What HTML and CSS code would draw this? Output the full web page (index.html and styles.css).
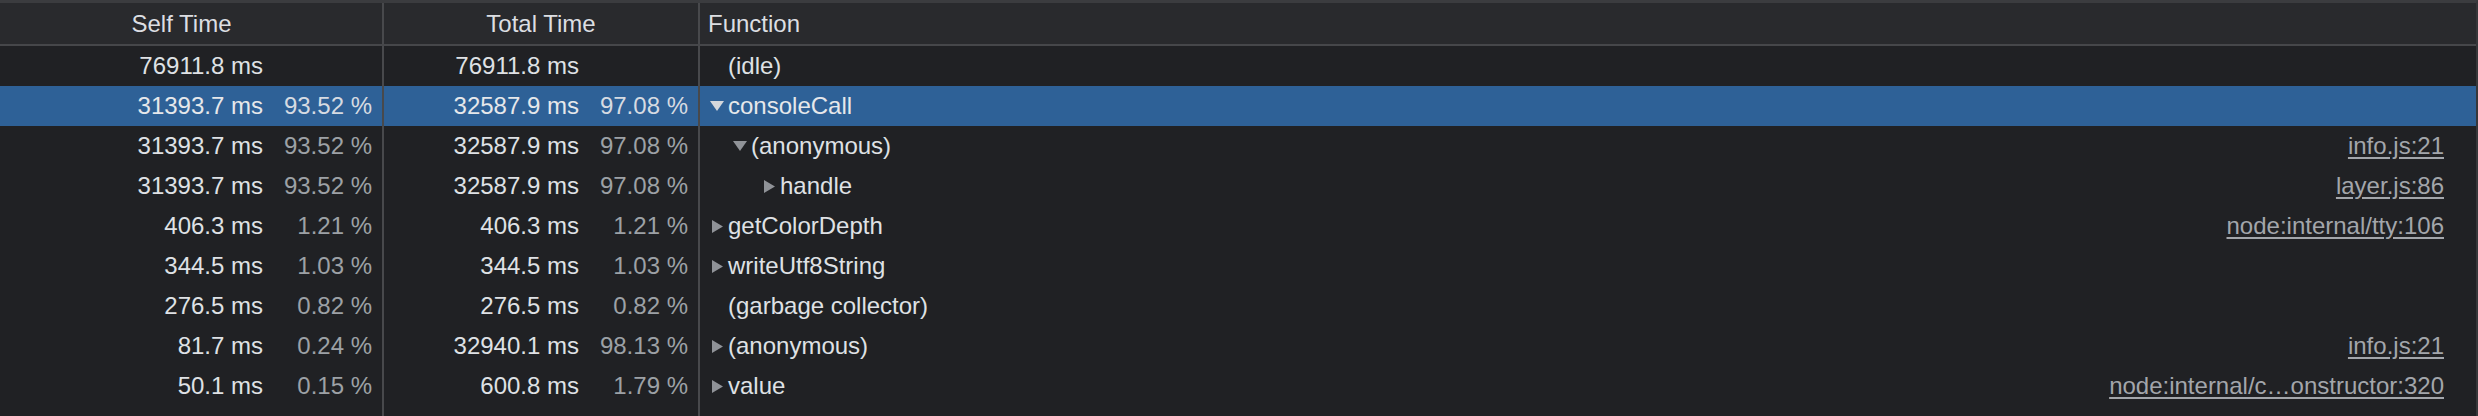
FILE: index.html
```html
<!DOCTYPE html>
<html>
<head>
<meta charset="utf-8">
<link rel="stylesheet" href="styles.css">
</head>
<body>
<div class="grid">
  <div class="row head">
    <div class="cell c-self"><span class="htext self-h">Self Time</span></div>
    <div class="cell c-total"><span class="htext">Total Time</span></div>
    <div class="cell c-func"><span class="htext">Function</span></div>
  </div>

  <div class="row">
    <div class="cell c-self"><span class="num">76911.8 ms</span><span class="pct"></span></div>
    <div class="cell c-total"><span class="num">76911.8 ms</span><span class="pct"></span></div>
    <div class="cell c-func d0"><span class="tog"></span><span class="name">(idle)</span></div>
  </div>

  <div class="row sel">
    <div class="cell c-self"><span class="num">31393.7 ms</span><span class="pct">93.52 %</span></div>
    <div class="cell c-total"><span class="num">32587.9 ms</span><span class="pct">97.08 %</span></div>
    <div class="cell c-func d0"><span class="tog"><svg class="down" width="14" height="10" viewBox="0 0 14 10"><path d="M0 0H14L7 10Z"/></svg></span><span class="name">consoleCall</span></div>
  </div>

  <div class="row">
    <div class="cell c-self"><span class="num">31393.7 ms</span><span class="pct">93.52 %</span></div>
    <div class="cell c-total"><span class="num">32587.9 ms</span><span class="pct">97.08 %</span></div>
    <div class="cell c-func d1"><span class="tog"><svg class="down" width="14" height="10" viewBox="0 0 14 10"><path d="M0 0H14L7 10Z"/></svg></span><span class="name">(anonymous)</span><a class="link">info.js:21</a></div>
  </div>

  <div class="row">
    <div class="cell c-self"><span class="num">31393.7 ms</span><span class="pct">93.52 %</span></div>
    <div class="cell c-total"><span class="num">32587.9 ms</span><span class="pct">97.08 %</span></div>
    <div class="cell c-func d2"><span class="tog"><svg class="right" width="11" height="13" viewBox="0 0 11 13"><path d="M0 0L11 6.5L0 13Z"/></svg></span><span class="name">handle</span><a class="link">layer.js:86</a></div>
  </div>

  <div class="row">
    <div class="cell c-self"><span class="num">406.3 ms</span><span class="pct">1.21 %</span></div>
    <div class="cell c-total"><span class="num">406.3 ms</span><span class="pct">1.21 %</span></div>
    <div class="cell c-func d0"><span class="tog"><svg class="right" width="11" height="13" viewBox="0 0 11 13"><path d="M0 0L11 6.5L0 13Z"/></svg></span><span class="name">getColorDepth</span><a class="link">node:internal/tty:106</a></div>
  </div>

  <div class="row">
    <div class="cell c-self"><span class="num">344.5 ms</span><span class="pct">1.03 %</span></div>
    <div class="cell c-total"><span class="num">344.5 ms</span><span class="pct">1.03 %</span></div>
    <div class="cell c-func d0"><span class="tog"><svg class="right" width="11" height="13" viewBox="0 0 11 13"><path d="M0 0L11 6.5L0 13Z"/></svg></span><span class="name">writeUtf8String</span></div>
  </div>

  <div class="row">
    <div class="cell c-self"><span class="num">276.5 ms</span><span class="pct">0.82 %</span></div>
    <div class="cell c-total"><span class="num">276.5 ms</span><span class="pct">0.82 %</span></div>
    <div class="cell c-func d0"><span class="tog"></span><span class="name">(garbage collector)</span></div>
  </div>

  <div class="row">
    <div class="cell c-self"><span class="num">81.7 ms</span><span class="pct">0.24 %</span></div>
    <div class="cell c-total"><span class="num">32940.1 ms</span><span class="pct">98.13 %</span></div>
    <div class="cell c-func d0"><span class="tog"><svg class="right" width="11" height="13" viewBox="0 0 11 13"><path d="M0 0L11 6.5L0 13Z"/></svg></span><span class="name">(anonymous)</span><a class="link">info.js:21</a></div>
  </div>

  <div class="row">
    <div class="cell c-self"><span class="num">50.1 ms</span><span class="pct">0.15 %</span></div>
    <div class="cell c-total"><span class="num">600.8 ms</span><span class="pct">1.79 %</span></div>
    <div class="cell c-func d0"><span class="tog"><svg class="right" width="11" height="13" viewBox="0 0 11 13"><path d="M0 0L11 6.5L0 13Z"/></svg></span><span class="name">value</span><a class="link">node:internal/c…onstructor:320</a></div>
  </div>

  <div class="row filler">
    <div class="cell c-self"></div>
    <div class="cell c-total"></div>
    <div class="cell c-func"></div>
  </div>
</div>
</body>
</html>
```

FILE: styles.css
```css
html, body {
  margin: 0;
  padding: 0;
  background: #202124;
  height: 100%;
}

body {
  font-family: "Liberation Sans", Arial, sans-serif;
  font-size: 24px;
  color: #dfe1e5;
  overflow: hidden;
}

.grid {
  display: flex;
  flex-direction: column;
  height: 416px;
  border-top: 3px solid #3b3c3f;
  border-right: 2px solid #36373a;
  box-sizing: border-box;
}

.row {
  display: flex;
  height: 40px;
  line-height: 40px;
  white-space: nowrap;
}

.row.head {
  height: 41px;
  line-height: 41px;
  background: #292a2d;
  border-bottom: 2px solid #46474a;
  flex: none;
}

.row.sel {
  background: #2e6197;
}

.row.filler {
  flex: 1;
}

.cell {
  display: flex;
  align-items: center;
  box-sizing: border-box;
  height: 100%;
}

.c-self {
  width: 384px;
  border-right: 2px solid #48494c;
  justify-content: flex-end;
  padding-right: 10px;
  flex: none;
}

.c-total {
  width: 316px;
  border-right: 2px solid #48494c;
  justify-content: flex-end;
  padding-right: 10px;
  flex: none;
}

.c-func {
  flex: 1;
  padding-left: 8px;
  padding-right: 32px;
  min-width: 0;
}

.head .c-self,
.head .c-total {
  justify-content: center;
  padding-right: 0;
}

.head .c-self {
  padding-right: 19px;
}

.htext {
  color: #dcdee2;
}

.num {
  color: #dfe1e5;
}

.pct {
  width: 109px;
  text-align: right;
  color: #9da1a6;
}

.sel .pct {
  color: #d6dbe2;
}

.sel .num,
.sel .name {
  color: #e6e8eb;
}

.tog {
  width: 20px;
  height: 100%;
  display: flex;
  align-items: center;
  justify-content: flex-end;
  padding-right: 4px;
  box-sizing: border-box;
  flex: none;
}

.tog svg {
  display: block;
  fill: #909398;
}

.tog svg.right {
  margin-right: 1px;
}

.sel .tog svg {
  fill: #d3d7dc;
}

.d1 {
  padding-left: 31px;
}

.d2 {
  padding-left: 60px;
}

.name {
  flex: none;
}

.link {
  margin-left: auto;
  color: #a3a6ab;
  text-decoration: underline;
  text-underline-offset: 3px;
}
```
